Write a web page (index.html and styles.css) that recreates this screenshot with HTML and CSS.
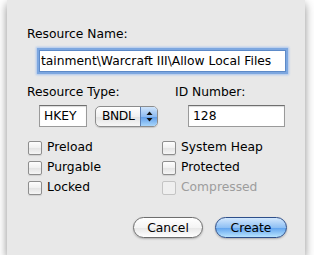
FILE: index.html
```
<!DOCTYPE html>
<html lang="en">
<head>
    <meta charset="UTF-8">
    <title>New Resource</title>
    <link rel="stylesheet" href="styles.css">
</head>
<body>
    <div class="dialog">
        <div class="label">Resource Name:</div>
        <div class="text-field name-field focused">
            <span class="scrolled">tainment\Warcraft III\Allow Local Files</span>
        </div>

        <div class="type-row">
            <div class="type-col">
                <div class="label">Resource Type:</div>
                <div class="type-inputs">
                    <div class="text-field type-field">HKEY</div>
                    <div class="popup">
                        <span class="popup-value">BNDL</span>
                        <span class="popup-arrows">
                            <svg width="7" height="11" viewBox="0 0 7 11">
                                <path d="M3.5 0.5 L6.5 4 L0.5 4 Z" fill="#111"/>
                                <path d="M3.5 10.5 L6.5 7 L0.5 7 Z" fill="#111"/>
                            </svg>
                        </span>
                    </div>
                </div>
            </div>
            <div class="id-col">
                <div class="label">ID Number:</div>
                <div class="text-field id-field">128</div>
            </div>
        </div>

        <div class="flags">
            <label class="check"><span class="box"></span>Preload</label>
            <label class="check"><span class="box"></span>System Heap</label>
            <label class="check"><span class="box"></span>Purgable</label>
            <label class="check"><span class="box"></span>Protected</label>
            <label class="check"><span class="box"></span>Locked</label>
            <label class="check disabled"><span class="box"></span>Compressed</label>
        </div>

        <div class="buttons">
            <button class="btn">Cancel</button>
            <button class="btn btn-default">Create</button>
        </div>
    </div>
</body>
</html>
```
FILE: styles.css
```
* {
    margin: 0;
    padding: 0;
    box-sizing: border-box;
}

body {
    background: #ffffff;
    font-family: 'DejaVu Sans', 'Lucida Grande', sans-serif;
    font-size: 12.3px;
    color: #000;
    overflow: hidden;
}

.dialog {
    width: 298px;
    height: 255px;
    margin-left: 7px;
    padding: 27px 20px 0 20px;
    background: #e8e8e8;
    box-shadow: 0 4px 9px rgba(0, 0, 0, 0.45);
}

.label {
    line-height: 15px;
}

.text-field {
    background: #fff;
    border: 1px solid #9a9a9a;
    border-top-color: #6f6f6f;
    box-shadow: inset 0 1px 1px rgba(0, 0, 0, 0.15);
    height: 22px;
    line-height: 20px;
    padding-left: 4px;
    white-space: nowrap;
    overflow: hidden;
}

.name-field {
    margin: 8px 0 0 12px;
    width: 247px;
    padding-left: 1px;
}

.focused {
    border-color: #5d8ac8;
    box-shadow: 0 0 0 2px #7da7e0, 0 0 2px 3px #a9c5ee;
}

.type-row {
    display: flex;
    margin-top: 13px;
}

.type-col {
    width: 149px;
}

.type-inputs {
    display: flex;
    align-items: center;
    gap: 8px;
    margin: 5px 0 0 12px;
}

.type-field {
    width: 48px;
}

.popup {
    display: flex;
    width: 63px;
    height: 21px;
    border: 1px solid #8c8c8c;
    border-radius: 5px;
    overflow: hidden;
    background: linear-gradient(#ffffff, #f0f0f0 50%, #e2e2e2 51%, #f7f7f7);
    box-shadow: 0 1px 1px rgba(0, 0, 0, 0.15);
}

.popup-value {
    flex: 1;
    padding-left: 6px;
    letter-spacing: -0.4px;
    line-height: 19px;
}

.popup-arrows {
    width: 17px;
    display: flex;
    align-items: center;
    justify-content: center;
    background: linear-gradient(#cfe4fb, #8ebcf2 50%, #5d9ce9 51%, #a9d6fb);
    border-left: 1px solid #5b7fb3;
}

.id-field {
    width: 97px;
    margin: 5px 0 0 13px;
}

.flags {
    display: grid;
    grid-template-columns: 134px 1fr;
    row-gap: 5px;
    margin-top: 13px;
    padding-left: 1px;
}

.check {
    display: flex;
    align-items: center;
    gap: 5px;
    height: 15px;
    line-height: 15px;
}

.box {
    width: 14px;
    height: 14px;
    border: 1px solid #8e8e8e;
    border-radius: 2px;
    background: linear-gradient(#fdfdfd, #f0f0f0 50%, #e4e4e4 51%, #f6f6f6);
    box-shadow: 0 1px 1px rgba(0, 0, 0, 0.1);
}

.check.disabled {
    color: #9d9d9d;
}

.check.disabled .box {
    border-color: #c4c4c4;
    background: #efefef;
    box-shadow: none;
}

.buttons {
    display: flex;
    justify-content: flex-end;
    gap: 12px;
    margin: 22px -2px 0 0;
}

.btn {
    font-family: inherit;
    font-size: 12.3px;
    height: 21px;
    width: 70px;
    border: 1px solid #6e6e6e;
    border-radius: 11px;
    background: linear-gradient(#ffffff, #f4f4f4 50%, #e6e6e6 51%, #ffffff);
    box-shadow: 0 1px 2px rgba(0, 0, 0, 0.25);
    color: #000;
}

.btn-default {
    width: 72px;
    border-color: #2e4f8a;
    background: linear-gradient(#d4e8fd, #8fc0f4 50%, #5fa2ee 51%, #b7e3fe);
}
```
